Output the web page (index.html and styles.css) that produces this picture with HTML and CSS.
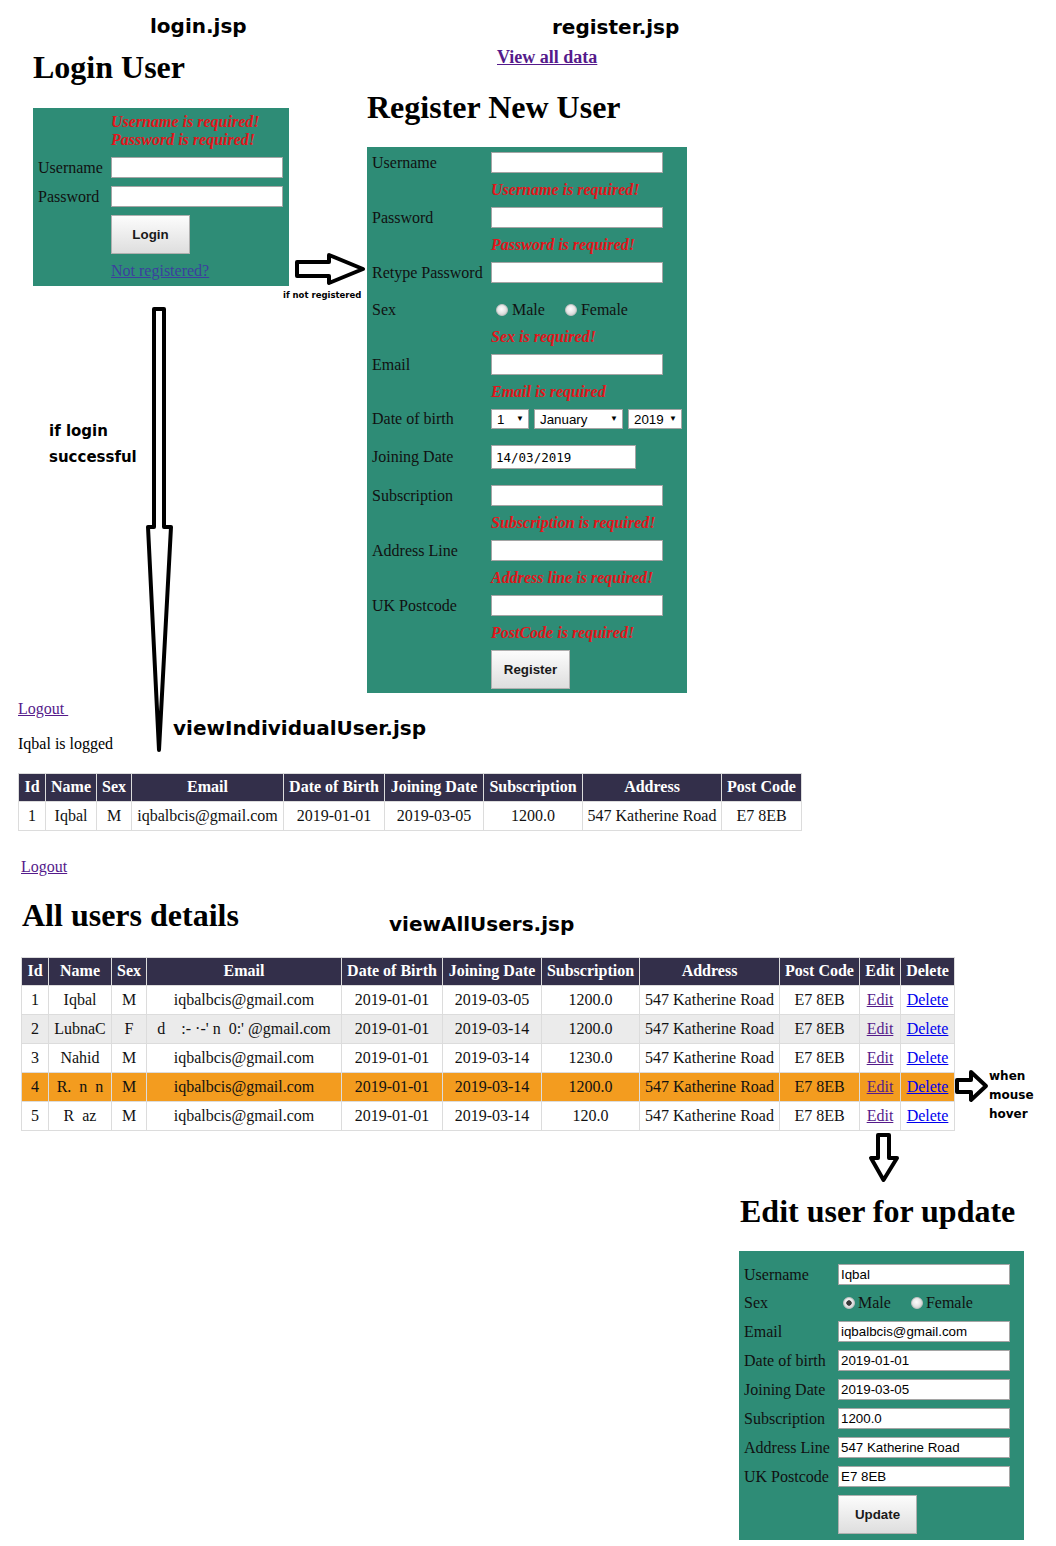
FILE: index.html
```html
<!DOCTYPE html>
<html lang="en">
<head>
<meta charset="utf-8">
<title>JSP screens</title>
<link rel="stylesheet" href="styles.css">
</head>
<body>
<div class="canvas">

  <div class="anno anno-title t-login">login.jsp</div>
  <div class="anno anno-title t-register">register.jsp</div>
  <div class="anno anno-title t-individual">viewIndividualUser.jsp</div>
  <div class="anno anno-title t-all">viewAllUsers.jsp</div>
  <div class="anno note-small n-notreg">if not registered</div>
  <div class="anno note-mid n-login">if login<br>successful</div>
  <div class="anno note-hover n-hover">when<br>mouse<br>hover</div>

  <svg class="arrow a-right" width="78" height="40" viewBox="0 0 78 40"><polygon points="5,12 37,12 37,5 71,19 37,33 37,26 5,26"/></svg>
  <svg class="arrow a-long" width="40" height="460" viewBox="0 0 40 460"><polygon points="14,9 24,9 24,227 31,227 19,450 8,227 14,227"/></svg>
  <svg class="arrow a-hover" width="40" height="40" viewBox="0 0 40 40"><polygon points="5,13 19,13 19,5 34,19 19,33 19,25 5,25"/></svg>
  <svg class="arrow a-down" width="40" height="60" viewBox="0 0 40 60"><polygon points="14,7 25,7 25,30 33,30 19.5,52 7,30 14,30"/></svg>

  <!-- login.jsp -->
  <section class="page p-login">
    <h1>Login User</h1>
    <form class="box login-box">
      <div class="err err-block"><div>Username is required!</div><div>Password is required!</div></div>
      <label class="lbl">Username</label><input class="field" type="text">
      <label class="lbl">Password</label><input class="field" type="password">
      <div class="col2"><button class="btn" type="button">Login</button></div>
      <div class="col2"><a class="notreg" href="#">Not registered?</a></div>
    </form>
  </section>

  <!-- register.jsp -->
  <section class="page p-register">
    <a class="viewall" href="#">View all data</a>
    <h1>Register New User</h1>
    <form class="box reg-box">
      <label class="lbl">Username</label><input class="field" type="text">
      <div class="err col2">Username is required!</div>
      <label class="lbl">Password</label><input class="field" type="password">
      <div class="err col2">Password is required!</div>
      <label class="lbl">Retype Password</label><input class="field" type="password">
      <div class="spacer col2"></div>
      <label class="lbl">Sex</label>
      <div class="radios"><input class="radio" type="radio" name="s1"><span class="rtxt">Male</span><input class="radio r2" type="radio" name="s1"><span class="rtxt">Female</span></div>
      <div class="err col2">Sex is required!</div>
      <label class="lbl">Email</label><input class="field" type="text">
      <div class="err col2">Email is required</div>
      <label class="lbl">Date of birth</label>
      <div class="dob">
        <span class="selwrap"><select class="sel s-day"><option>1</option></select></span>
        <span class="selwrap"><select class="sel s-month"><option>January</option></select></span>
        <span class="selwrap"><select class="sel s-year"><option>2019</option></select></span>
      </div>
      <div class="spacer col2 tight"></div>
      <label class="lbl">Joining Date</label><input class="field datefield" type="text" value="14/03/2019">
      <div class="spacer col2"></div>
      <label class="lbl">Subscription</label><input class="field" type="text">
      <div class="err col2">Subscription is required!</div>
      <label class="lbl">Address Line</label><input class="field" type="text">
      <div class="err col2">Address line is required!</div>
      <label class="lbl">UK Postcode</label><input class="field" type="text">
      <div class="err col2">PostCode is required!</div>
      <div class="col2"><button class="btn" type="button">Register</button></div>
    </form>
  </section>

  <!-- viewIndividualUser.jsp -->
  <section class="page p-individual">
    <a class="logout" href="#">Logout&nbsp;</a>
    <p class="logged">Iqbal is logged</p>
    <table class="grid t-ind">
      <colgroup><col class="c1"><col class="c2"><col class="c3"><col class="c4"><col class="c5"><col class="c6"><col class="c7"><col class="c8"><col class="c9"></colgroup>
      <tr><th>Id</th><th>Name</th><th>Sex</th><th>Email</th><th>Date of Birth</th><th>Joining Date</th><th>Subscription</th><th>Address</th><th>Post Code</th></tr>
      <tr><td>1</td><td>Iqbal</td><td>M</td><td>iqbalbcis@gmail.com</td><td>2019-01-01</td><td>2019-03-05</td><td>1200.0</td><td>547 Katherine Road</td><td>E7 8EB</td></tr>
    </table>
  </section>

  <!-- viewAllUsers.jsp -->
  <section class="page p-all">
    <a class="logout" href="#">Logout</a>
    <h1 class="h-all">All users details</h1>
    <table class="grid t-all">
      <colgroup><col class="c1"><col class="c2"><col class="c3"><col class="c4"><col class="c5"><col class="c6"><col class="c7"><col class="c8"><col class="c9"><col class="c10"><col class="c11"></colgroup>
      <tr><th>Id</th><th>Name</th><th>Sex</th><th>Email</th><th>Date of Birth</th><th>Joining Date</th><th>Subscription</th><th>Address</th><th>Post Code</th><th>Edit</th><th>Delete</th></tr>
      <tr><td>1</td><td>Iqbal</td><td>M</td><td>iqbalbcis@gmail.com</td><td>2019-01-01</td><td>2019-03-05</td><td>1200.0</td><td>547 Katherine Road</td><td>E7 8EB</td><td><a class="edit" href="#">Edit</a></td><td><a class="del" href="#">Delete</a></td></tr>
      <tr class="alt"><td>2</td><td>LubnaC</td><td>F</td><td>d&nbsp;&nbsp;&nbsp; :- ·-' n&nbsp; 0:' @gmail.com</td><td>2019-01-01</td><td>2019-03-14</td><td>1200.0</td><td>547 Katherine Road</td><td>E7 8EB</td><td><a class="edit" href="#">Edit</a></td><td><a class="del" href="#">Delete</a></td></tr>
      <tr><td>3</td><td>Nahid</td><td>M</td><td>iqbalbcis@gmail.com</td><td>2019-01-01</td><td>2019-03-14</td><td>1230.0</td><td>547 Katherine Road</td><td>E7 8EB</td><td><a class="edit" href="#">Edit</a></td><td><a class="del" href="#">Delete</a></td></tr>
      <tr class="hover"><td>4</td><td>R.&nbsp; n&nbsp; n</td><td>M</td><td>iqbalbcis@gmail.com</td><td>2019-01-01</td><td>2019-03-14</td><td>1200.0</td><td>547 Katherine Road</td><td>E7 8EB</td><td><a class="edit" href="#">Edit</a></td><td><a class="del" href="#">Delete</a></td></tr>
      <tr><td>5</td><td>R&nbsp; az</td><td>M</td><td>iqbalbcis@gmail.com</td><td>2019-01-01</td><td>2019-03-14</td><td>120.0</td><td>547 Katherine Road</td><td>E7 8EB</td><td><a class="edit" href="#">Edit</a></td><td><a class="del" href="#">Delete</a></td></tr>
    </table>
  </section>

  <!-- edit -->
  <section class="page p-edit">
    <h1 class="h-edit">Edit user for update</h1>
    <form class="box edit-box">
      <label class="lbl">Username</label><input class="field" type="text" value="Iqbal">
      <label class="lbl">Sex</label>
      <div class="radios"><input class="radio" type="radio" name="s2" checked><span class="rtxt">Male</span><input class="radio r2" type="radio" name="s2"><span class="rtxt">Female</span></div>
      <label class="lbl">Email</label><input class="field" type="text" value="iqbalbcis@gmail.com">
      <label class="lbl">Date of birth</label><input class="field" type="text" value="2019-01-01">
      <label class="lbl">Joining Date</label><input class="field" type="text" value="2019-03-05">
      <label class="lbl">Subscription</label><input class="field" type="text" value="1200.0">
      <label class="lbl">Address Line</label><input class="field" type="text" value="547 Katherine Road">
      <label class="lbl">UK Postcode</label><input class="field" type="text" value="E7 8EB">
      <div class="col2"><button class="btn" type="button">Update</button></div>
    </form>
  </section>

</div>
</body>
</html>
```

FILE: styles.css
```css
* { box-sizing: border-box; }

body {
  margin: 0;
  background: #fff;
  font-family: "Liberation Serif", "Times New Roman", serif;
  font-size: 16px;
  color: #000;
}

.canvas {
  position: relative;
  width: 1056px;
  height: 1546px;
  overflow: hidden;
}

/* ---------- annotations ---------- */
.anno {
  position: absolute;
  font-family: "DejaVu Sans", Verdana, sans-serif;
  font-weight: 700;
  color: #000;
  white-space: nowrap;
}
.anno-title { font-size: 20px; line-height: 23px; }
.t-login { left: 150px; top: 15px; }
.t-register { left: 552px; top: 16px; }
.t-individual { left: 173px; top: 717px; }
.t-all { left: 389px; top: 913px; }

.note-small { font-size: 8.5px; line-height: 10px; }
.n-notreg { left: 283px; top: 290px; }

.note-mid { font-size: 15px; line-height: 26px; }
.n-login { left: 49px; top: 418px; }

.note-hover { font-size: 12px; line-height: 19px; }
.n-hover { left: 989px; top: 1067px; }

.arrow { position: absolute; overflow: visible; }
.arrow polygon { fill: #fff; stroke: #000; stroke-width: 4; stroke-linejoin: round; }
.a-right { left: 292px; top: 250px; }
.a-long { left: 140px; top: 300px; }
.a-hover { left: 952px; top: 1067px; }
.a-down { left: 864px; top: 1128px; }

/* ---------- pages ---------- */
.page { position: absolute; }
.page h1 {
  margin: 0 0 23px;
  font-size: 32px;
  line-height: 36px;
  font-weight: 700;
  white-space: nowrap;
}

.p-login { left: 33px; top: 49px; width: 256px; }
.p-register { left: 367px; top: 48px; width: 320px; }
.p-register h1 { margin-bottom: 22px; }
.p-individual { left: 18px; top: 700px; }
.p-all { left: 21px; top: 858px; }
.p-edit { left: 739px; top: 1193px; width: 285px; }
.h-edit { padding-left: 1px; margin-bottom: 22px !important; }
.h-all { margin: 21px 0 24px !important; padding-left: 1px; }

/* ---------- green form boxes ---------- */
.box {
  margin: 0;
  background: #2e8c76;
  display: grid;
  row-gap: 8px;
  align-items: center;
}
.login-box {
  grid-template-columns: 73px 172px;
  padding: 5px 6px 6px 5px;
}
.reg-box {
  grid-template-columns: 119px 191px;
  padding: 5px 5px 4px 5px;
}
.edit-box {
  grid-template-columns: 94px 172px;
  padding: 13px 14px 6px 5px;
}

.col2 { grid-column: 2; }
.lbl {
  grid-column: 1;
  color: #111;
  line-height: 18px;
  white-space: nowrap;
}
.err {
  color: #e3151b;
  font-weight: 700;
  font-style: italic;
  line-height: 18px;
  white-space: nowrap;
}
.err-block { grid-column: 2; }
.spacer { height: 0; }
.spacer.tight { margin-top: -2px; }

.field {
  display: block;
  width: 172px;
  height: 21px;
  margin: 0;
  padding: 1px 2px;
  border: 1px solid #a5a5a5;
  background: #fff;
  font-family: "Liberation Sans", Arial, sans-serif;
  font-size: 13.33px;
  color: #000;
}
.reg-box .datefield {
  width: 145px;
  height: 24px;
  padding: 0 4px;
  font-family: "DejaVu Sans Mono", "Liberation Mono", monospace;
  font-size: 12.5px;
}

.btn {
  display: block;
  width: 79px;
  height: 39px;
  margin: 0;
  padding: 0;
  border: 1px solid #b0b0b0;
  background: linear-gradient(#fcfcfc, #dedede);
  font-family: "Liberation Sans", Arial, sans-serif;
  font-weight: 700;
  font-size: 13.33px;
  color: #1a1a1a;
}

.notreg {
  color: #3c3f9e;
  line-height: 18px;
  display: block;
}

/* radios */
.radios {
  display: flex;
  align-items: center;
  height: 20px;
  color: #111;
}
.reg-box .radios { margin-top: 1px; }
.radio {
  appearance: none;
  -webkit-appearance: none;
  flex: none;
  width: 12px;
  height: 12px;
  margin: 0 4px 0 5px;
  border-radius: 50%;
  border: 1px solid #c4c4c4;
  background: radial-gradient(circle at 45% 40%, #fdfdfd 0, #e8e8e8 45%, #c2c2c2 100%);
}
.radio:checked {
  background:
    radial-gradient(circle, #3a3a3a 0, #3a3a3a 2.4px, transparent 3px),
    radial-gradient(circle at 45% 40%, #fdfdfd 0, #e8e8e8 45%, #c2c2c2 100%);
}
.edit-box .radio { margin-right: 3px; }
.radio.r2 { margin-left: 20px; }
.rtxt { line-height: 18px; }

/* selects */
.dob { display: flex; gap: 5px; height: 20px; }
.selwrap { position: relative; display: block; height: 20px; }
.selwrap::after {
  content: "\25BC";
  position: absolute;
  right: 5px;
  top: 5px;
  font-size: 8px;
  line-height: 10px;
  color: #000;
  pointer-events: none;
}
.sel {
  appearance: none;
  -webkit-appearance: none;
  display: block;
  height: 20px;
  margin: 0;
  padding: 0 0 0 5px;
  border: 1px solid #a5a5a5;
  border-radius: 0;
  background: #fff;
  font-family: "Liberation Sans", Arial, sans-serif;
  font-size: 13.33px;
  color: #000;
}
.s-day { width: 38px; }
.s-month { width: 89px; }
.s-year { width: 54px; }

/* ---------- links / text ---------- */
.viewall {
  display: block;
  padding-left: 130px;
  margin-bottom: 23px;
  font-size: 18px;
  font-weight: 700;
  line-height: 18px;
  color: #551a8b;
}
.logout {
  display: inline-block;
  line-height: 18px;
  color: #551a8b;
}
.logged {
  margin: 17px 0 20px;
  line-height: 18px;
}

/* ---------- tables ---------- */
.grid {
  border-collapse: collapse;
  table-layout: fixed;
}
.grid th,
.grid td {
  border: 1px solid #dcdcdc;
  padding: 5px 3px;
  line-height: 18px;
  text-align: center;
  white-space: nowrap;
  overflow: hidden;
}
.grid th {
  padding-top: 4px;
  background: #332f4a;
  color: #fff;
  font-weight: 700;
}
.grid td { color: #111; }
.grid tr.alt td { background: #ebebeb; }
.grid tr.hover td { background: #f39c1f; }

.t-ind { width: 783px; }
.t-ind .c1 { width: 27px; }
.t-ind .c2 { width: 51px; }
.t-ind .c3 { width: 35px; }
.t-ind .c4 { width: 152px; }
.t-ind .c5 { width: 101px; }
.t-ind .c6 { width: 99px; }
.t-ind .c7 { width: 99px; }
.t-ind .c8 { width: 139px; }
.t-ind .c9 { width: 80px; }

.t-all { width: 933px; }
.t-all .c1 { width: 27px; }
.t-all .c2 { width: 63px; }
.t-all .c3 { width: 35px; }
.t-all .c4 { width: 195px; }
.t-all .c5 { width: 101px; }
.t-all .c6 { width: 99px; }
.t-all .c7 { width: 98px; }
.t-all .c8 { width: 140px; }
.t-all .c9 { width: 80px; }
.t-all .c10 { width: 41px; }
.t-all .c11 { width: 54px; }

.edit { color: #551a8b; }
.del { color: #0000ee; }
```
